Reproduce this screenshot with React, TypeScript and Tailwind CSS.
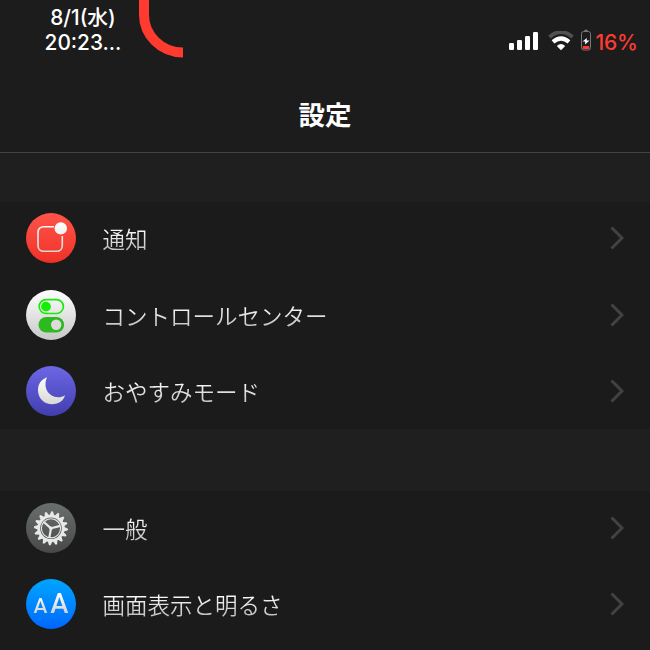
import React from "react";

const gearTeeth = Array.from({ length: 16 }, (_, i) => i * 22.5 + 4);

function Defs() {
  return (
    <defs>
      <linearGradient id="glyph" x1="0" y1="10" x2="0" y2="42" gradientUnits="userSpaceOnUse">
        <stop offset="0" stopColor="#ffffff" />
        <stop offset="1" stopColor="#d2d2d0" />
      </linearGradient>
    </defs>
  );
}

function NotificationIcon() {
  return (
    <svg viewBox="0 0 50 50" className="size-full">
      <Defs />
      <path
        d="M28 13.7H18Q12 13.7 12 19.7V32.3Q12 38.3 18 38.3H30.3Q36.3 38.3 36.3 32.3V23"
        fill="none"
        stroke="url(#glyph)"
        strokeWidth="1.6"
      />
      <circle cx="34.8" cy="15.4" r="6.2" fill="url(#glyph)" />
    </svg>
  );
}

function ControlIcon() {
  return (
    <svg viewBox="0 0 50 50" className="size-full">
      <rect x="13.2" y="9.7" width="24.2" height="13.8" rx="6.9" fill="none" stroke="#16ee08" strokeWidth="1.7" />
      <circle cx="20" cy="16.6" r="4.9" fill="#16ee08" />
      <rect x="12.5" y="27" width="25.6" height="15.6" rx="7.8" fill="#2cba20" />
      <circle cx="30.2" cy="34.7" r="5.2" fill="#dcdcdc" />
    </svg>
  );
}

function MoonIcon() {
  return (
    <svg viewBox="0 0 50 50" className="size-full">
      <Defs />
      <path d="M21 11.2C14 14 11.8 19 12 25C12.5 33 18.5 38.2 26 38.2C33 38.2 37.5 34.6 39 29.2C35.5 31.4 32 31.6 28.5 30.7C20.5 28.4 17.3 19.2 21 11.2Z" fill="url(#glyph)" />
    </svg>
  );
}

function GearIcon() {
  return (
    <svg viewBox="0 0 50 50" className="size-full">
      <g fill="#e8e8e8" stroke="#e8e8e8">
        {gearTeeth.map((a) => (
          <path key={a} d="M22.4 13L24.2 8.3H25.8L27.6 13Z" stroke="none" transform={`rotate(${a} 25 25.3)`} />
        ))}
        <circle cx="25" cy="25.3" r="12.2" fill="none" strokeWidth="2.8" />
        <circle cx="25" cy="25.3" r="9.6" fill="none" strokeWidth="1.1" />
        <path d="M25 25.3L17.8 19M25 25.3L34.4 22.9M25 25.3L23.3 34.9" fill="none" strokeWidth="2.2" />
        <circle cx="25" cy="25.3" r="1.8" stroke="none" />
      </g>
    </svg>
  );
}

function DisplayIcon() {
  return (
    <div className="flex h-full items-baseline justify-center gap-[3px] bg-linear-to-b from-white from-30% to-[#d0d0d0] to-70% bg-clip-text pt-[7px] font-[Roboto] leading-9 font-medium text-transparent">
      <span className="text-[21px]">A</span>
      <span className="text-[27.5px]">A</span>
    </div>
  );
}

interface RowProps {
  label: string;
  color: string;
  children: React.ReactNode;
}

function Row({ label, color, children }: RowProps) {
  return (
    <li className="flex h-[76.3px] items-center pr-[26px] pl-[26px]">
      <div className={`size-[50px] shrink-0 overflow-hidden rounded-full bg-linear-to-b ${color}`}>{children}</div>
      <span className="ml-[26.5px] flex-1 bg-linear-to-b from-white from-20% to-[#c4c4c4] to-85% bg-clip-text text-[22.5px] leading-8 font-[350] whitespace-nowrap text-transparent">
        {label}
      </span>
      <svg viewBox="0 0 14 24" className="h-6 w-3.5 shrink-0">
        <path d="M1.5 1.5L12 12L1.5 22.5" fill="none" stroke="#424242" strokeWidth="3" />
      </svg>
    </li>
  );
}

function StatusBar() {
  return (
    <div className="flex h-[62px] font-[Inter,'Noto_Sans_CJK_JP',sans-serif] text-white">
      <div className="ml-[41px] w-[84px] pt-[6px] text-center text-[20.8px] leading-[24.5px] font-medium whitespace-nowrap">
        <div>8/1(水)</div>
        <div>20:23...</div>
      </div>
      <svg viewBox="0 0 50 62" className="ml-[13px] h-[62px] w-[50px]">
        <path d="M6 0V15C6 35 23 52.5 45 52.5" fill="none" stroke="#ff3b30" strokeWidth="10" />
      </svg>
      <div className="mt-[29px] ml-auto flex h-[23px] items-center pr-[12.5px]">
        <svg viewBox="0 0 30 20" className="h-5 w-[30px]" fill="white">
          <rect x="0" y="12" width="5" height="7" rx="1.2" />
          <rect x="8" y="9" width="5" height="10" rx="1.2" />
          <rect x="16" y="5" width="5" height="14" rx="1.2" />
          <rect x="24" y="1" width="5" height="18" rx="1.2" />
        </svg>
        <svg viewBox="0 0 26 20" className="ml-[9px] h-5 w-[26px]" fill="none">
          <path d="M1.5 6Q13-4 24.5 6" stroke="#515151" strokeWidth="3.8" />
          <path d="M5 10.8Q13 4.2 21 10.8" stroke="white" strokeWidth="4.2" />
          <path d="M8.8 15Q13 10.8 17.2 15L13 19.2Z" fill="white" />
        </svg>
        <svg viewBox="0 0 10 22" className="mb-[2px] ml-[7px] h-[22px] w-[10px]">
          <path d="M3 2.2Q3 .5 5 .5T7 2.2Z" fill="#777777" />
          <rect x=".5" y="2.5" width="9" height="18.5" rx="2.2" fill="none" stroke="#777777" />
          <rect x="1.7" y="17" width="6.6" height="3" rx=".6" fill="#ff3b30" />
          <path d="M5.8 9L1.6 12.5H4.2L4 15.4L8.5 11.6H5.7Z" fill="white" />
        </svg>
        <span className="mt-[4px] ml-[5px] text-[21px] leading-none font-medium tracking-[-0.3px] text-[#ff3b30]">16%</span>
      </div>
    </div>
  );
}

export default function App() {
  return (
    <main className="h-[650px] w-[650px] overflow-hidden bg-[#1f1f1f] font-['Noto_Sans_CJK_JP',sans-serif]">
      <header className="h-[153px] border-b border-[#434343] bg-[#1c1c1c]">
        <StatusBar />
        <h1 className="mt-[32px] text-center text-[26.5px] leading-[40px] font-bold text-white">設定</h1>
      </header>
      <ul className="mt-[47.3px] h-[229px] bg-linear-to-b from-[#1f1f1f] from-[2px] to-[#1b1b1b] to-[2px]">
        <Row label="通知" color="from-[#ff5349] to-[#f03026]">
          <NotificationIcon />
        </Row>
        <Row label="コントロールセンター" color="from-white to-[#c8c8c8]">
          <ControlIcon />
        </Row>
        <Row label="おやすみモード" color="from-[#6d67e5] to-[#423eaf]">
          <MoonIcon />
        </Row>
      </ul>
      <ul className="mt-[60.2px] bg-linear-to-b from-[#1f1f1f] from-[1.5px] to-[#1b1b1b] to-[1.5px]">
        <Row label="一般" color="from-[#69706c] to-[#484848]">
          <GearIcon />
        </Row>
        <Row label="画面表示と明るさ" color="from-[#00a5ff] to-[#0066ff]">
          <DisplayIcon />
        </Row>
        <Row label="" color="from-[#1b1b1b] to-[#1b1b1b]">
          {null}
        </Row>
      </ul>
    </main>
  );
}
